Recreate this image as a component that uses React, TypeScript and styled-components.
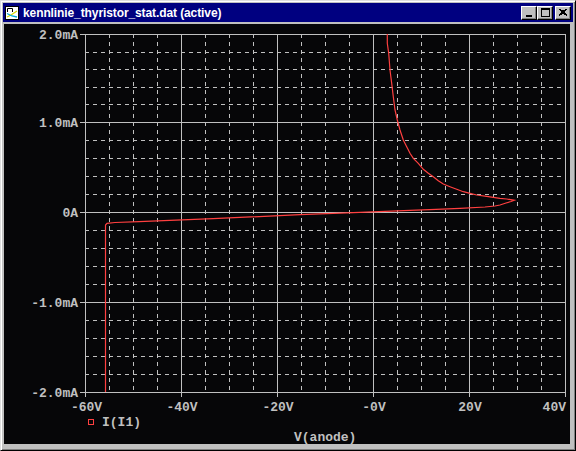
import React from "react";
import styled, { createGlobalStyle } from "styled-components";

const GlobalStyle = createGlobalStyle`
  html, body { margin: 0; padding: 0; background: #c0c0c0; }
  body { width: 576px; height: 451px; overflow: hidden; }
`;

const Window = styled.div`
  width: 576px;
  height: 451px;
  box-sizing: border-box;
  background: #c0c0c0;
  border-top: 1px solid #dfdfdf;
  border-left: 1px solid #dfdfdf;
  border-right: 1px solid #000;
  border-bottom: 1px solid #000;
  box-shadow: inset 1px 1px #fff, inset -1px -1px #808080;
  padding: 2px;
  display: flex;
  flex-direction: column;
`;

const TitleBar = styled.div`
  height: 19px;
  flex: none;
  background: #000080;
  display: flex;
  align-items: center;
  padding: 0 2px 0 1px;
`;

const TitleIcon = styled.svg`
  width: 16px;
  height: 16px;
  flex: none;
`;

const TitleText = styled.span`
  margin-left: 3px;
  flex: 1;
  color: #fff;
  font-family: "Liberation Sans", Arial, sans-serif;
  font-weight: bold;
  font-size: 12px;
  letter-spacing: -0.1px;
  white-space: nowrap;
`;

const Buttons = styled.div`
  display: flex;
  align-items: center;
`;

const CapButton = styled.div<{ $gap?: boolean }>`
  width: 16px;
  height: 14px;
  box-sizing: border-box;
  margin-left: ${(p) => (p.$gap ? "2px" : "0")};
  background: #c0c0c0;
  border-top: 1px solid #fff;
  border-left: 1px solid #fff;
  border-right: 1px solid #000;
  border-bottom: 1px solid #000;
  box-shadow: inset -1px -1px #808080;
  display: flex;
  align-items: center;
  justify-content: center;
`;

const Client = styled.div`
  flex: 1;
  margin: 2px 3px 4px 1px;
  background: #060608;
  display: flex;
  flex-direction: column;
`;

const Chart = styled.svg`
  display: block;
  flex: none;
  width: 566px;
  height: 392px;
`;

const LabelText = styled.span`
  font-family: "Liberation Mono", "DejaVu Sans Mono", monospace;
  font-weight: bold;
  font-size: 13px;
  line-height: 13px;
  color: #c0c0c0;
  white-space: pre;
`;

const LegendRow = styled.div`
  height: 12px;
  flex: none;
  display: flex;
  align-items: center;
  padding-left: 84px;
  gap: 8px;
`;

const LegendSwatch = styled.span<{ $color: string }>`
  width: 6px;
  height: 6px;
  box-sizing: border-box;
  border: 1px solid ${(p) => p.$color};
`;

const AxisTitle = styled.div`
  flex: none;
  height: 13px;
  margin-top: 3px;
  padding-left: 290px;
  display: flex;
  align-items: flex-start;
`;

const GRID = "#c0c0c0";
const TRACE = "#ff4040";

const X0 = 85;
const XSTEP = 24;
const majorsY = [34, 122, 212, 302, 392];
const yLines: { y: number; major: boolean }[] = [];
for (let i = 0; i < majorsY.length; i++) {
  yLines.push({ y: majorsY[i], major: true });
  if (i < majorsY.length - 1) {
    const a = majorsY[i];
    const b = majorsY[i + 1];
    for (let k = 1; k < 5; k++) {
      yLines.push({ y: Math.round(a + ((b - a) * k) / 5), major: false });
    }
  }
}

const yLabels = [
  { y: 34, t: "2.0mA" },
  { y: 122, t: "1.0mA" },
  { y: 212, t: "0A" },
  { y: 302, t: "-1.0mA" },
  { y: 392, t: "-2.0mA" },
];

const xLabels = [
  { x: 86.5, t: "-60V", a: "middle" },
  { x: 182, t: "-40V", a: "middle" },
  { x: 278, t: "-20V", a: "middle" },
  { x: 374, t: "-0V", a: "middle" },
  { x: 470, t: "20V", a: "middle" },
  { x: 566, t: "40V", a: "end" },
];

const upper: [number, number][] = [
  [387.3, 34], [387.3, 43.3], [388.7, 53.3], [390, 70], [391.7, 83.3], [393.3, 96.7],
  [395, 110], [397.3, 120], [400, 130], [403.3, 140], [406.7, 146.7], [410, 153.3],
  [413.3, 158.3], [418.3, 163.3], [423.3, 169.3], [428.3, 173.3], [433.3, 176.7],
  [438.3, 180.7], [443.3, 184], [450, 186.7], [456.7, 189.3], [463.3, 191.7],
  [470, 193.3], [476.7, 195], [486.7, 196.3], [493.3, 197.3], [500, 198.3],
  [506.7, 199], [514.3, 200.3],
];
const lower: [number, number][] = [
  [514.3, 200.3], [511, 201.5], [506, 203], [500, 205], [495, 206], [485, 207],
  [460, 208.3], [436, 209.3], [410, 210.3], [385, 211.3], [360, 212.3],
  [300, 214.7], [213, 218.7], [139, 221.7], [115, 222.5], [107, 223.3],
  [105.5, 225], [105.5, 392],
];
const pts = [...upper, ...lower].map(([x, y]) => `${x},${y}`).join(" ");

function PlotSvg() {
  return (
    <Chart viewBox="0 0 566 392">
      <g transform="translate(-4,-24)" shapeRendering="crispEdges">
        {Array.from({ length: 21 }, (_, i) => {
          const x = X0 + i * XSTEP + 0.5;
          const major = i % 4 === 0;
          return (
            <line
              key={"v" + i}
              x1={x}
              x2={x}
              y1={34}
              y2={major ? 397 : 392}
              stroke={GRID}
              strokeWidth={1}
              strokeDasharray={major ? undefined : "4 4"}
            />
          );
        })}
        {yLines.map((l, i) => (
          <line
            key={"h" + i}
            x1={l.major ? 80 : 85}
            x2={566}
            y1={l.y + 0.5}
            y2={l.y + 0.5}
            stroke={GRID}
            strokeWidth={1}
            strokeDasharray={l.major ? undefined : "4 4"}
          />
        ))}
      </g>
      <g transform="translate(-4,-24)">
        <polyline points={pts} fill="none" stroke={TRACE} strokeWidth={1.2} strokeLinejoin="miter" />
        {yLabels.map((l) => (
          <text
            key={l.t}
            x={78}
            y={l.y + 4.5}
            textAnchor="end"
            fill={GRID}
            fontFamily='"Liberation Mono", monospace'
            fontWeight="bold"
            fontSize={13}
          >
            {l.t}
          </text>
        ))}
        {xLabels.map((l) => (
          <text
            key={l.t}
            x={l.x}
            y={411}
            textAnchor={l.a as "middle" | "end"}
            fill={GRID}
            fontFamily='"Liberation Mono", monospace'
            fontWeight="bold"
            fontSize={13}
          >
            {l.t}
          </text>
        ))}
      </g>
    </Chart>
  );
}

export default function App() {
  return (
    <>
      <GlobalStyle />
      <Window>
        <TitleBar>
          <TitleIcon viewBox="0 0 16 16">
            <rect x="1.5" y="1.5" width="13" height="13" fill="#fff" stroke="#000" />
            <path d="M3.5 7 V3.5 H8.5 V7" fill="none" stroke="#000" />
            <path d="M3 12 L7 10 L13 6" fill="none" stroke="#d8d800" strokeWidth="1.3" />
            <path d="M3 8.5 L8 11 L13 12" fill="none" stroke="#00a8d8" strokeWidth="1.3" />
          </TitleIcon>
          <TitleText>kennlinie_thyristor_stat.dat (active)</TitleText>
          <Buttons>
            <CapButton>
              <svg width="8" height="8" viewBox="0 0 8 8">
                <rect x="1" y="6" width="6" height="2" fill="#000" />
              </svg>
            </CapButton>
            <CapButton>
              <svg width="9" height="9" viewBox="0 0 9 9">
                <rect x="0.5" y="0.5" width="8" height="8" fill="none" stroke="#000" />
                <rect x="0" y="0" width="9" height="2" fill="#000" />
              </svg>
            </CapButton>
            <CapButton $gap>
              <svg width="8" height="7" viewBox="0 0 8 7">
                <path d="M0 0 L8 7 M8 0 L0 7 M1 0 L8 6 M7 0 L0 6" stroke="#000" strokeWidth="1.1" shapeRendering="crispEdges" />
              </svg>
            </CapButton>
          </Buttons>
        </TitleBar>
        <Client>
          <PlotSvg />
          <LegendRow>
            <LegendSwatch $color={TRACE} />
            <LabelText>I(I1)</LabelText>
          </LegendRow>
          <AxisTitle>
            <LabelText>V(anode)</LabelText>
          </AxisTitle>
        </Client>
      </Window>
    </>
  );
}
